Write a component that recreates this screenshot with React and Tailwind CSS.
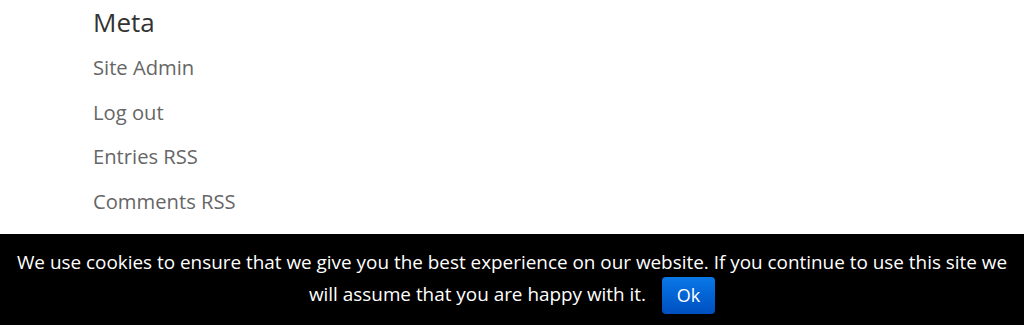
import React from 'react';

const links = ['Site Admin', 'Log out', 'Entries RSS', 'Comments RSS'];

export default function App() {
  return (
    <div className="relative h-[325px] w-full overflow-hidden bg-white font-['Open_Sans',sans-serif]">
      <aside className="pl-[93px] pt-[4px]">
        <h2 className="text-[26px] leading-[36px] text-[#333]">Meta</h2>
        <ul className="mt-[5px]">
          {links.map((l) => (
            <li key={l} className="text-[20.2px] leading-[44.5px] text-[#666]">
              <a href="#">{l}</a>
            </li>
          ))}
        </ul>
      </aside>

      <div className="absolute bottom-0 left-0 right-0 h-[91px] bg-black px-2 pt-[14px] text-center text-[18.9px] leading-[29px] text-white">
        We use cookies to ensure that we give you the best experience on our website. If you continue to use this site we will assume that you are happy with it.
        <button className="ml-[16px] inline-block h-[37px] w-[53px] rounded-[4px] bg-gradient-to-b from-[#0b78e8] to-[#004fc0] align-middle text-[18px] leading-[37px] text-white">
          Ok
        </button>
      </div>
    </div>
  );
}
